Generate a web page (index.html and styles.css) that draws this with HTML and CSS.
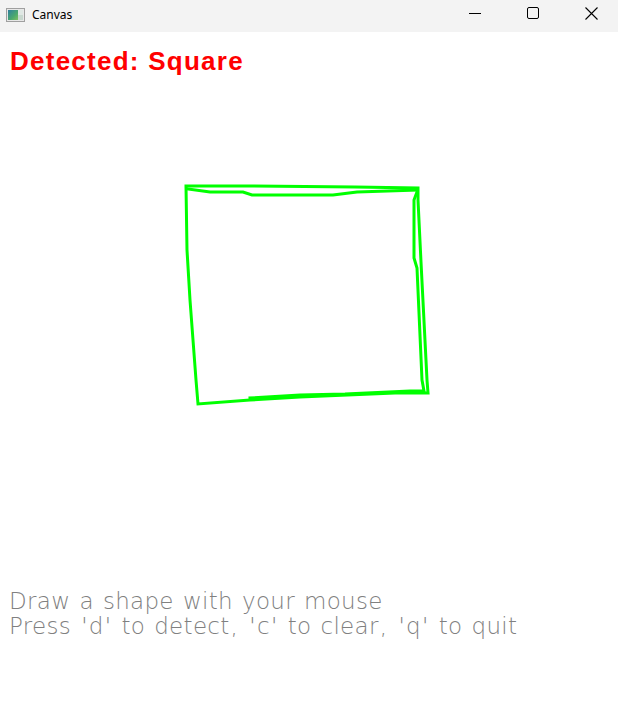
FILE: index.html
```html
<!DOCTYPE html>
<html>
<head>
<meta charset="utf-8">
<link rel="stylesheet" href="styles.css">
</head>
<body>
<div class="window">
  <div class="titlebar">
    <div class="app">
      <svg class="app-icon" width="19" height="14" viewBox="0 0 19 14">
        <defs>
          <linearGradient id="g" x1="0" y1="0" x2="1" y2="1">
            <stop offset="0" stop-color="#2f7fa0"/>
            <stop offset="0.6" stop-color="#4aa86f"/>
            <stop offset="1" stop-color="#7fbf60"/>
          </linearGradient>
        </defs>
        <rect x="0.5" y="0.5" width="18" height="13" fill="#e8e8e8" stroke="#a0a0a0"/>
        <rect x="2" y="2" width="10" height="10" fill="url(#g)"/>
        <rect x="12" y="2" width="5" height="5" fill="#dfe8e4"/>
        <rect x="12" y="7" width="5" height="5" fill="#c8d8cf"/>
      </svg>
      <span class="title">Canvas</span>
    </div>
    <div class="controls">
      <div class="btn">
        <svg width="12" height="12" viewBox="0 0 12 12"><path d="M0 6.5H12" stroke="#000" stroke-width="1"/></svg>
      </div>
      <div class="btn">
        <svg width="12" height="12" viewBox="0 0 12 12"><rect x="0.5" y="0.5" width="11" height="11" rx="1.5" fill="none" stroke="#000" stroke-width="1"/></svg>
      </div>
      <div class="btn btn-close">
        <svg width="13" height="13" viewBox="0 0 13 13"><path d="M0.5 0.5L12.5 12.5M12.5 0.5L0.5 12.5" stroke="#000" stroke-width="1.1"/></svg>
      </div>
    </div>
  </div>
  <div class="canvas">
    <svg class="drawing" width="618" height="682" viewBox="0 32 618 682">
      <g fill="none" stroke="#00ff00" stroke-width="3" stroke-linejoin="miter" stroke-linecap="square">
        <path d="M186,186 L243,186 L355,187 L418,188 L418,200 L421,262 L427,380 L428,393 L395,393 L300,397 L250,400 L198,404 L196,380 L190,300 L187,250 L186,186"/>
        <path d="M188,189 L210,192 L243,192 L252,195 L333,195 L357,192 L417,190"/>
        <path d="M417,192 L414,200 L414,258 L417,268 L422,380 L424,391 L410,391 L345,394 L300,395 L250,398"/>
      </g>
    </svg>
    <div class="detected">Detected: Square</div>
    <div class="help">
      <div>Draw a shape with your mouse</div>
      <div>Press <span class="q">'</span>d<span class="q">'</span> to detect<span class="q">,</span> <span class="q">'</span>c<span class="q">'</span> to clear<span class="q">,</span> <span class="q">'</span>q<span class="q">'</span> to quit</div>
    </div>
  </div>
</div>
</body>
</html>
```
FILE: styles.css
```css
html, body {
  margin: 0;
  padding: 0;
  background: #ffffff;
}
.window {
  width: 618px;
  height: 714px;
  display: flex;
  flex-direction: column;
  overflow: hidden;
}
.titlebar {
  height: 32px;
  flex: none;
  background: #f3f3f3;
  display: flex;
  align-items: center;
  justify-content: space-between;
}
.app {
  display: flex;
  align-items: center;
  padding-left: 6px;
  gap: 7px;
}
.app-icon {
  display: block;
  margin-top: -2px;
}
.title {
  font-family: "Noto Sans", "Open Sans", sans-serif;
  font-size: 12px;
  color: #000;
  margin-top: -3px;
}
.controls {
  display: flex;
  height: 32px;
  margin-right: -2px;
}
.btn {
  width: 58px;
  height: 32px;
  display: flex;
  align-items: center;
  justify-content: center;
}
.btn svg {
  display: block;
  margin-top: -6px;
}
.btn-close svg {
  margin-top: -5px;
}
.canvas {
  position: relative;
  flex: 1;
  background: #ffffff;
}
.drawing {
  position: absolute;
  left: 0;
  top: 0;
  display: block;
}
.detected {
  font-family: "Liberation Sans", Arial, sans-serif;
  font-weight: bold;
  font-size: 26px;
  line-height: 26px;
  letter-spacing: 1.25px;
  color: #ff0000;
  padding: 16px 0 0 10px;
}
.help {
  position: relative;
  margin-top: 515px;
  padding-left: 9px;
  font-family: "DejaVu Sans", sans-serif;
  font-weight: 200;
  font-size: 23px;
  line-height: 25px;
  letter-spacing: 0.3px;
  word-spacing: 1.5px;
  color: #808080;
}
.q {
  padding: 0 1px;
}
```
